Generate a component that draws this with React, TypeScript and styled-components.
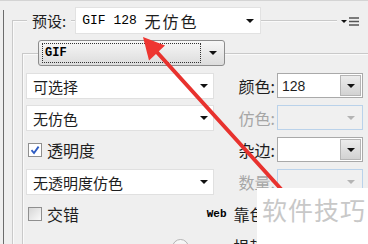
import React from 'react';
import styled, { createGlobalStyle } from 'styled-components';

const GlobalStyle = createGlobalStyle`
  html, body {
    margin: 0;
    padding: 0;
    background: #efefef;
  }
  body {
    font-family: "Noto Sans CJK SC", "Noto Sans", sans-serif;
    color: #1e1e1e;
  }
`;

const Window = styled.div`
  position: relative;
  width: 368px;
  height: 244px;
  overflow: hidden;
  box-sizing: border-box;
  background: #efefef;
  border-top: 1px solid #d4d4d4;
`;

// dark left edge of the panel
const Frame = styled.div`
  display: flow-root;
  margin: 9px 0 0 3px;
  height: 240px;
  border-left: 1px solid #6c6c6c;
`;

const Group = styled.div<{ $x: number; $y: number }>`
  margin: ${(p) => p.$y}px 0 0 ${(p) => p.$x}px;
  border-top: 1px solid #c9c9c9;
  border-left: 1px solid #c9c9c9;
  box-shadow: inset 1px 1px 0 #fafafa;
`;

const PresetRow = styled.div`
  display: flex;
  align-items: center;
  gap: 4px;
  margin: -15px 0 0 14px;
  height: 28px;
`;

const PresetLabel = styled.span`
  padding: 0 5px;
  background: #efefef;
  font-size: 15px;
  line-height: 1;
`;

const PresetSelect = styled.div`
  display: flex;
  align-items: center;
  box-sizing: border-box;
  width: 186px;
  height: 27px;
  margin-top: 1px;
  padding: 0 6px 0 6px;
  background: #fff;
  border: 1px solid #e2e2e2;
`;

const Mono = styled.span<{ $size?: number; $bold?: boolean }>`
  font-family: "Liberation Mono", "DejaVu Sans Mono", monospace;
  font-size: ${(p) => p.$size || 13}px;
  font-weight: ${(p) => (p.$bold ? 700 : 400)};
  color: #000;
  white-space: pre;
`;

const PresetCjk = styled.span`
  font-size: 16px;
  letter-spacing: 2px;
  line-height: 1;
`;

const Caret = styled.span<{ $muted?: boolean }>`
  margin-left: auto;
  width: 0;
  height: 0;
  border-left: 4px solid transparent;
  border-right: 4px solid transparent;
  border-top: 4px solid ${(p) => (p.$muted ? '#b4b4b4' : '#111')};
`;

const GifButton = styled.div`
  display: flex;
  align-items: center;
  box-sizing: border-box;
  width: 187px;
  height: 26px;
  margin: -14px 0 0 15px;
  padding: 0 7px 0 3px;
  border: 1px solid #8c8c8c;
  border-radius: 3px;
  background: linear-gradient(#f7f7f7, #dcdcdc);
`;

const FocusBox = styled.div`
  display: flex;
  align-items: center;
  box-sizing: border-box;
  width: 159px;
  height: 20px;
  padding-left: 2px;
  border: 1px dotted #333;
`;

const Grid = styled.div`
  display: grid;
  grid-template-columns: 188px 63px 86px;
  grid-auto-rows: 26px;
  row-gap: 6px;
  margin: 7px 0 0 3px;
`;

const Select = styled.div`
  display: flex;
  align-items: center;
  box-sizing: border-box;
  padding: 0 5px 0 6px;
  background: #fff;
  border: 1px solid #e0e0e0;
  font-size: 15px;
  line-height: 1;
`;

const Label = styled.div<{ $disabled?: boolean; $row?: number; $inset?: number }>`
  grid-column: 2;
  grid-row: ${(p) => p.$row || 'auto'};
  display: flex;
  align-items: center;
  justify-content: flex-end;
  padding-right: ${(p) => p.$inset || 2}px;
  font-size: 16px;
  line-height: 1;
  white-space: nowrap;
  color: ${(p) => (p.$disabled ? '#a6a6a6' : '#1e1e1e')};
`;

const WebLabel = styled(Label)`
  grid-column: 1 / 3;
  gap: 7px;
`;

const Combo = styled.div<{ $disabled?: boolean }>`
  grid-column: 3;
  display: flex;
  align-items: stretch;
  box-sizing: border-box;
  height: 25px;
  border: 1px solid ${(p) => (p.$disabled ? '#bad2ea' : '#a9a9a9')};
  background: ${(p) => (p.$disabled ? '#f0f0f0' : '#fff')};
`;

const ComboValue = styled.div`
  flex: 1;
  display: flex;
  align-items: center;
  padding-left: 4px;
  font-family: "Liberation Sans", Arial, sans-serif;
  font-size: 14px;
`;

const ComboButton = styled.div<{ $disabled?: boolean }>`
  display: flex;
  align-items: center;
  justify-content: center;
  width: 19px;
  margin: 1px;
  border: 1px solid ${(p) => (p.$disabled ? 'transparent' : '#b5b5b5')};
  background: ${(p) => (p.$disabled ? 'transparent' : 'linear-gradient(#ececec, #d2d2d2)')};

  span {
    margin: 0;
  }
`;

const CheckRow = styled.label<{ $row: number }>`
  grid-column: 1;
  grid-row: ${(p) => p.$row};
  display: flex;
  align-items: center;
  gap: 5px;
  padding-left: 2px;
  font-size: 16px;
  line-height: 1;
`;

const Box = styled.span<{ $checked?: boolean }>`
  display: flex;
  align-items: center;
  justify-content: center;
  box-sizing: border-box;
  width: 14px;
  height: 14px;
  border: 1px solid #8f8f8f;
  background: ${(p) => (p.$checked ? '#fff' : 'linear-gradient(135deg, #d6d6d6, #fafafa)')};
`;

const Knob = styled.div`
  grid-column: 1;
  grid-row: 6;
  width: 15px;
  height: 15px;
  margin: 6px 0 0 146px;
  border-radius: 50%;
  border: 1px solid #b4b4b4;
  background: linear-gradient(#fafafa, #dedede);
`;

const MenuButton = styled.div`
  position: absolute;
  top: 14px;
  left: 337px;
  right: 0;
  display: flex;
  align-items: center;
  gap: 2px;
  padding: 0 0 0 4px;
  height: 12px;
  background: #efefef;
`;

const Overlay = styled.svg`
  position: absolute;
  left: 0;
  top: -1px;
  pointer-events: none;
`;

const Watermark = styled.div`
  position: absolute;
  left: 257px;
  top: 187px;
  right: 0;
  bottom: 0;
  padding: 9px 0 0 5px;
  background: #fff;
  color: #c8c8c8;
  font-size: 25px;
  line-height: 1;
  letter-spacing: 1px;
`;

const ComboField = ({ value, disabled }: { value?: string; disabled?: boolean }) => (
  <Combo $disabled={disabled}>
    <ComboValue>{value}</ComboValue>
    <ComboButton $disabled={disabled}>
      <Caret $muted={disabled} />
    </ComboButton>
  </Combo>
);

const Check = ({ checked, row, children }: { checked?: boolean; row: number; children: React.ReactNode }) => (
  <CheckRow $row={row}>
    <Box $checked={checked}>
      {checked && (
        <svg width="10" height="10" viewBox="0 0 10 10">
          <path d="M1.5 5.2 L4 8 L8.6 1.6" fill="none" stroke="#2d5bc2" strokeWidth="1.8" />
        </svg>
      )}
    </Box>
    {children}
  </CheckRow>
);

function App() {
  return (
    <Window>
      <GlobalStyle />
      <Frame>
        <Group $x={8} $y={10}>
          <PresetRow>
            <PresetLabel>预设:</PresetLabel>
            <PresetSelect>
              <Mono>GIF 128 </Mono>
              <PresetCjk>无仿色</PresetCjk>
              <Caret />
            </PresetSelect>
          </PresetRow>

          <Group $x={9} $y={19}>
            <GifButton>
              <FocusBox>
                <Mono $size={12} $bold>GIF</Mono>
              </FocusBox>
              <Caret />
            </GifButton>

            <Grid>
              <Select>可选择<Caret /></Select>
              <Label>颜色:</Label>
              <ComboField value="128" />

              <Select>无仿色<Caret /></Select>
              <Label $disabled>仿色:</Label>
              <ComboField disabled />

              <Check checked row={3}>透明度</Check>
              <Label $row={3}>杂边:</Label>
              <ComboField />

              <Select>无透明度仿色<Caret /></Select>
              <Label $disabled>数量:</Label>
              <ComboField disabled />

              <Check row={5}>交错</Check>
              <WebLabel $row={5} $inset={7}>
                <Mono $size={11} $bold>Web</Mono>
                <span>靠色:</span>
              </WebLabel>
              <ComboField />

              <Knob />
              <Label $row={6} $inset={7}>损耗:</Label>
              <ComboField />
            </Grid>
          </Group>
        </Group>
      </Frame>

      <MenuButton>
        <Caret style={{ marginLeft: 0, borderWidth: '3px 3px 0' }} />
        <svg width="10" height="9" viewBox="0 0 10 9">
          <path d="M0 1h10M0 4.5h10M0 8h10" stroke="#555" strokeWidth="1.4" />
        </svg>
      </MenuButton>

      <Overlay width="368" height="244" viewBox="0 0 368 244">
        <line x1="155" y1="50" x2="300" y2="210" stroke="#e8322e" strokeWidth="4" strokeLinecap="round" />
        <polygon points="143,37 165,45.6 149,60.4" fill="#ee3631" />
      </Overlay>

      <Watermark>软件技巧</Watermark>
    </Window>
  );
}

export default App;
